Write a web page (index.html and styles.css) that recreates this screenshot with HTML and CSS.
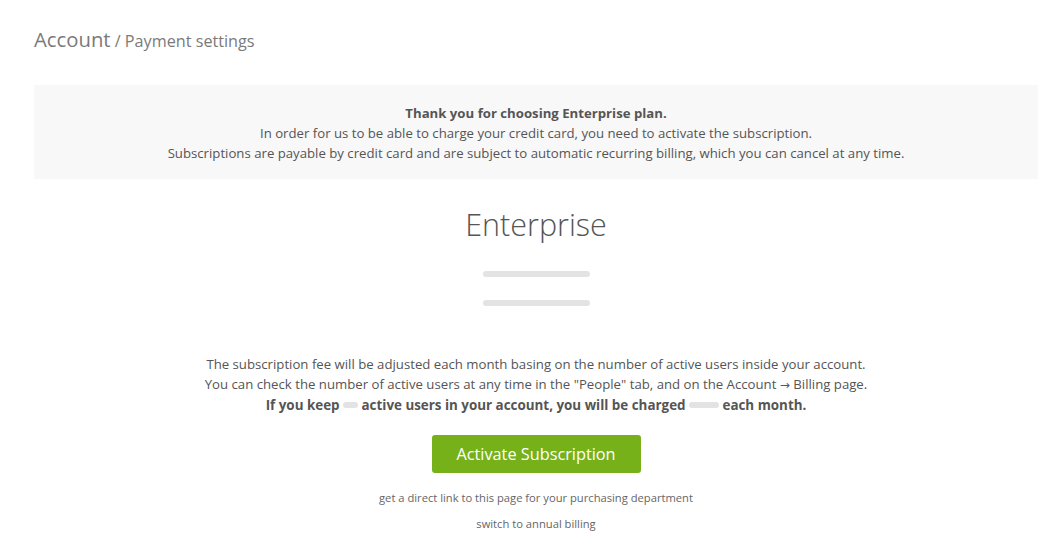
FILE: index.html
```html
<!DOCTYPE html>
<html>
<head>
<meta charset="utf-8">
<link rel="stylesheet" href="styles.css">
</head>
<body>
<div class="page">
  <div class="crumbs"><span class="crumb-main">Account</span> <span class="crumb-sub">/ Payment settings</span></div>
  <div class="notice">
    <div class="notice-title">Thank you for choosing Enterprise plan.</div>
    <div>In order for us to be able to charge your credit card, you need to activate the subscription.</div>
    <div>Subscriptions are payable by credit card and are subject to automatic recurring billing, which you can cancel at any time.</div>
  </div>
  <div class="plan">
    <h1 class="plan-name">Enterprise</h1>
    <div class="bar bar-first"></div>
    <div class="bar bar-second"></div>
    <div class="info">
      <div>The subscription fee will be adjusted each month basing on the number of active users inside your account.</div>
      <div>You can check the number of active users at any time in the "People" tab, and on the Account <span class="arrow">→</span> Billing page.</div>
      <div class="info-strong">If you keep <span class="pill pill-s"></span> active users in your account, you will be charged <span class="pill pill-l"></span> each month.</div>
    </div>
    <button class="activate">Activate Subscription</button>
    <a class="small-link link-first">get a direct link to this page for your purchasing department</a>
    <a class="small-link link-second">switch to annual billing</a>
  </div>
</div>
</body>
</html>
```

FILE: styles.css
```css
html, body {
  margin: 0;
  padding: 0;
  background: #fff;
}
body {
  font-family: "Open Sans", "Noto Sans", sans-serif;
  color: #555;
}
.page {
  padding: 0 25px 0 34px;
}
.crumbs {
  padding-top: 25px;
  height: 28px;
  line-height: 28px;
  color: #7a7a7a;
}
.crumb-main {
  font-size: 20.3px;
}
.crumb-sub {
  font-size: 16.2px;
}
.notice {
  margin-top: 32px;
  background: #f8f8f8;
  padding: 18px 0 16px;
  text-align: center;
  font-size: 13.2px;
  line-height: 20px;
  color: #555;
}
.notice-title {
  font-weight: 700;
}
.plan {
  display: flex;
  flex-direction: column;
  align-items: center;
  text-align: center;
}
.plan-name {
  margin: 25px 0 0;
  font-size: 30.5px;
  font-weight: 300;
  line-height: 40px;
  color: #555;
}
.bar {
  width: 107px;
  height: 6px;
  border-radius: 3px;
  background: #e3e3e3;
}
.bar-first {
  margin-top: 27px;
}
.bar-second {
  margin-top: 23px;
}
.info {
  margin-top: 48px;
  font-size: 13.2px;
  line-height: 20px;
  color: #555;
}
.arrow {
  font-family: "DejaVu Sans", sans-serif;
  font-size: 12px;
}
.info-strong {
  font-weight: 700;
  font-size: 13.4px;
}
.pill {
  display: inline-block;
  height: 6px;
  border-radius: 3px;
  background: #e3e3e3;
  vertical-align: 2px;
}
.pill-s {
  width: 15px;
}
.pill-l {
  width: 30px;
}
.activate {
  margin-top: 20px;
  width: 209px;
  height: 38px;
  border: 0;
  border-radius: 3px;
  background: #76b11a;
  color: #fff;
  font-family: "Open Sans", "Noto Sans", sans-serif;
  font-size: 16.3px;
  padding: 0;
  cursor: pointer;
}
.small-link {
  font-size: 11.2px;
  line-height: 16px;
  color: #666;
  text-decoration: none;
  cursor: pointer;
}
.link-first {
  margin-top: 17px;
}
.link-second {
  margin-top: 10px;
}
```
